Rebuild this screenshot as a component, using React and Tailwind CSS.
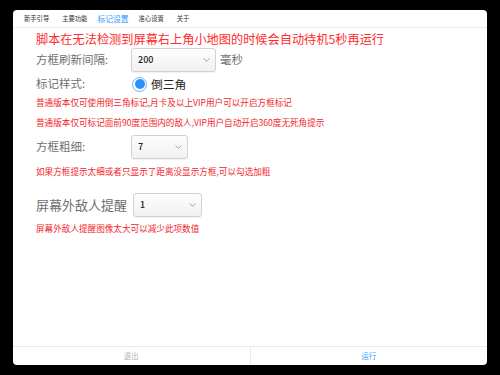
import React from "react";

const Chevron = () => (
  <svg width="7" height="4" viewBox="0 0 7 4" className="shrink-0">
    <path d="M0.5 0.5 L3.5 3.3 L6.5 0.5" fill="none" stroke="#9a9a9a" strokeWidth="0.9" />
  </svg>
);

const Select = ({ value, width }) => (
  <div
    className={`${width} h-[24px] rounded-[3px] border border-[#d2d2d2] bg-gradient-to-b from-[#fdfdfd] to-[#f1f1f1] shadow-[0_1px_1px_rgba(0,0,0,0.06)] flex items-center justify-between pl-[6px] pr-[5px]`}
  >
    <span className="text-[9px] font-medium text-[#222]">{value}</span>
    <Chevron />
  </div>
);

const Note = ({ children, className }) => (
  <div className={`text-[8.6px] leading-[12px] text-[#f2262b] whitespace-nowrap ${className}`}>{children}</div>
);

const App = () => {
  return (
    <div className="w-[500px] h-[375px] bg-black pt-[10px] pb-[10px] px-[13px] font-['Noto_Sans_CJK_SC',sans-serif]">
      <div className="h-full bg-white rounded-[4px] flex flex-col overflow-hidden">
        {/* tabs */}
        <div className="h-[18px] shrink-0 border-b border-[#ececec] flex items-center pl-[11px] text-[6.3px] text-[#333]">
          <span>新手引导</span>
          <span className="ml-[13px]">主要功能</span>
          <span className="ml-[10px] text-[7.8px] text-[#2f97ff]">标记设置</span>
          <span className="ml-[10px]">准心设置</span>
          <span className="ml-[13px]">关于</span>
        </div>

        {/* content */}
        <div className="flex-1 pl-[23px] pt-[4px]">
          <div className="text-[12.2px] leading-[14px] text-[#ff2a2a]">
            脚本在无法检测到屏幕右上角小地图的时候会自动待机5秒再运行
          </div>

          <div className="mt-[2px] flex items-center h-[24px]">
            <div className="w-[95px] text-[11.5px] text-[#6f6f6f]">方框刷新间隔:</div>
            <Select value="200" width="w-[85px]" />
            <span className="ml-[4px] text-[11.5px] text-[#6f6f6f]">毫秒</span>
          </div>

          <div className="flex items-center h-[24px]">
            <div className="w-[96px] text-[11.5px] text-[#6f6f6f]">标记样式:</div>
            <div className="w-[15px] h-[15px] rounded-full border-[1.5px] border-[#6db1ff] bg-white flex items-center justify-center">
              <div className="w-[10px] h-[10px] rounded-full bg-[#2b8fff]" />
            </div>
            <span className="ml-[4px] text-[11.8px] text-[#222]">倒三角</span>
          </div>

          <Note className="mt-0">普通版本仅可使用倒三角标记,月卡及以上VIP用户可以开启方框标记</Note>
          <Note className="mt-[8px]">普通版本仅可标记面前90度范围内的敌人,VIP用户自动开启360度无死角提示</Note>

          <div className="mt-[7px] flex items-center h-[24px]">
            <div className="w-[95px] text-[11.5px] text-[#6f6f6f]">方框粗细:</div>
            <Select value="7" width="w-[57px]" />
          </div>

          <Note className="mt-[6px]">如果方框提示太细或者只显示了距离没显示方框,可以勾选加粗</Note>

          <div className="mt-[16px] flex items-center h-[24px]">
            <div className="w-[97px] text-[13px] text-[#6f6f6f]">屏幕外敌人提醒</div>
            <Select value="1" width="w-[69px]" />
          </div>

          <Note className="mt-[5px]">屏幕外敌人提醒图像太大可以减少此项数值</Note>
        </div>

        {/* footer */}
        <div className="h-[19px] shrink-0 border-t border-[#e8e8e8] flex text-[7.5px]">
          <div className="flex-1 flex items-center justify-center text-[#b3b3b3]">退出</div>
          <div className="w-px bg-[#e8e8e8]" />
          <div className="flex-1 flex items-center justify-center text-[#3a9fff]">运行</div>
        </div>
      </div>
    </div>
  );
};

export default App;
